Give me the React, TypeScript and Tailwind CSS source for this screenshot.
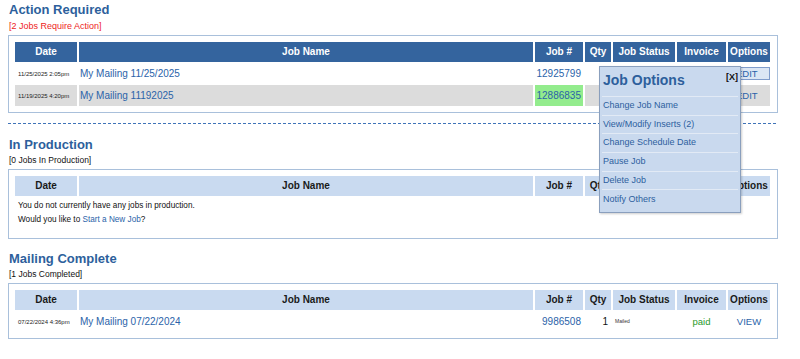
import React from 'react';

type Row = {
  date: string;
  name: string;
  job: string;
  qty?: string;
  status?: string;
  invoice?: string;
  option?: 'edit' | 'edit-active' | 'view';
  grey?: boolean;
  greenJob?: boolean;
};

const columns = [
  { label: 'Date', w: 'w-[62px]' },
  { label: 'Job Name', w: 'w-[454px]' },
  { label: 'Job #', w: 'w-[48px]' },
  { label: 'Qty', w: 'w-[26px]' },
  { label: 'Job Status', w: 'w-[62px]' },
  { label: 'Invoice', w: 'w-[49px]' },
  { label: 'Options', w: 'w-[42px]' },
];

const menuItems = [
  'Change Job Name',
  'View/Modify Inserts (2)',
  'Change Schedule Date',
  'Pause Job',
  'Delete Job',
  'Notify Others',
];

function SectionTitle({ title, sub, red }: { title: string; sub: string; red?: boolean }) {
  return (
    <>
      <h2 className="h-[16px] pl-px text-[13px] font-bold leading-[16px] text-[#2d5f9c]">{title}</h2>
      {red ? (
        <p className="mt-[2px] h-[12px] pl-px text-[9px] leading-[12px] text-[#ee1c1c]">{sub}</p>
      ) : (
        <p className="mt-[2px] h-[11px] pl-px text-[8.5px] leading-[11px] text-[#111]">{sub}</p>
      )}
    </>
  );
}

function JobTable({ dark, children }: { dark?: boolean; children: React.ReactNode }) {
  return (
    <div className="mt-[3px] w-[770px] border border-[#a9c0db] px-[4px] pt-[5px] pb-[5px]">
      <table className="w-[759px] table-fixed border-separate border-spacing-x-[2px] border-spacing-y-px">
        <colgroup>
          {columns.map((c) => (
            <col key={c.label} className={c.w} />
          ))}
        </colgroup>
        <thead>
          <tr className="h-[20px]">
            {columns.map((c) => (
              <th
                key={c.label}
                className={
                  dark
                    ? 'bg-[#34649e] p-0 text-center text-[10px] font-bold leading-none text-white'
                    : 'bg-[#c9daf0] p-0 text-center text-[10px] font-bold leading-none text-[#1a1a1a]'
                }
              >
                {c.label}
              </th>
            ))}
          </tr>
        </thead>
        <tbody>{children}</tbody>
      </table>
    </div>
  );
}

function JobRow({ row }: { row: Row }) {
  const bg = row.grey ? 'bg-[#dcdcdc]' : 'bg-white';
  return (
    <tr className="h-[21px]">
      <td className={`${bg} p-0 pl-[3px] text-[6px] leading-none text-[#222]`}>{row.date}</td>
      <td className={`${bg} p-0 pl-px text-[10px] leading-none text-[#2b63a9]`}>{row.name}</td>
      <td
        className={`${row.greenJob ? 'bg-[#93ec8d]' : bg} p-0 pr-[2px] text-right text-[10px] leading-none text-[#2b63a9]`}
      >
        {row.job}
      </td>
      <td className={`${bg} p-0 pr-[3px] text-right text-[10px] leading-none text-[#111]`}>{row.qty}</td>
      <td className={`${bg} p-0 pl-[2px] text-[5px] leading-none text-[#333]`}>{row.status}</td>
      <td className={`${bg} p-0 text-center text-[9.5px] leading-none text-[#2a9a2a]`}>{row.invoice}</td>
      <td className={`${bg} p-0 text-[9.5px] leading-none text-[#2b63a9]`}>
        {row.option === 'view' ? (
          <div className="text-center">VIEW</div>
        ) : (
          <div
            className={`ml-[3px] flex h-[13px] w-[39px] items-center border pl-[4px] ${
              row.option === 'edit-active' ? 'border-[#7f9ccb] bg-[#dbe6f4]' : 'border-transparent'
            }`}
          >
            EDIT
          </div>
        )}
      </td>
    </tr>
  );
}

function JobOptionsMenu() {
  return (
    <div className="absolute top-[66px] left-[599px] h-[147px] w-[142px] border border-[#8a9fbd] bg-[#c9d9ee] shadow-[1px_1px_2px_rgba(0,0,0,0.2)]">
      <div className="flex h-[29px] items-start justify-between pr-[2px] pl-[3px]">
        <span className="pt-[4px] text-[14px] font-bold leading-[18px] text-[#2d5f9c]">Job Options</span>
        <span className="pt-[4px] text-[9px] font-bold leading-[12px] text-[#111]">[X]</span>
      </div>
      <ul className="mx-[2px]">
        {menuItems.map((item) => (
          <li
            key={item}
            className="flex h-[18.7px] items-center border-t border-[#e2eaf5] pl-px text-[9px] text-[#2d5f9e]"
          >
            {item}
          </li>
        ))}
      </ul>
    </div>
  );
}

export default function App() {
  return (
    <div className="relative h-[359px] w-[800px] overflow-hidden bg-white px-2 pt-[2px] font-['Liberation_Sans',Arial,sans-serif]">
      {/* Action Required */}
      <SectionTitle title="Action Required" sub="[2 Jobs Require Action]" red />
      <JobTable dark>
        <JobRow
          row={{ date: '11/25/2025 2:05pm', name: 'My Mailing 11/25/2025', job: '12925799', option: 'edit-active' }}
        />
        <JobRow
          row={{ date: '11/19/2025 4:20pm', name: 'My Mailing 11192025', job: '12886835', option: 'edit', grey: true, greenJob: true }}
        />
      </JobTable>

      <div className="mt-[10px] h-px w-[770px] bg-[repeating-linear-gradient(to_right,#3f73b8_0_3px,transparent_3px_5px)]" />

      {/* In Production */}
      <div className="mt-[13px]">
        <SectionTitle title="In Production" sub="[0 Jobs In Production]" />
        <JobTable>
          <tr>
            <td colSpan={7} className="h-[35px] p-0 pt-[2px] pl-[3px] align-top text-[8.2px] leading-[14px] text-[#111]">
              <div>You do not currently have any jobs in production.</div>
              <div>
                Would you like to <span className="text-[#2b63a9]">Start a New Job</span>?
              </div>
            </td>
          </tr>
        </JobTable>
      </div>

      {/* Mailing Complete */}
      <div className="mt-[12px]">
        <SectionTitle title="Mailing Complete" sub="[1 Jobs Completed]" />
        <JobTable>
          <JobRow
            row={{
              date: '07/22/2024 4:36pm',
              name: 'My Mailing 07/22/2024',
              job: '9986508',
              qty: '1',
              status: 'Mailed',
              invoice: 'paid',
              option: 'view',
            }}
          />
        </JobTable>
      </div>

      <JobOptionsMenu />
    </div>
  );
}
